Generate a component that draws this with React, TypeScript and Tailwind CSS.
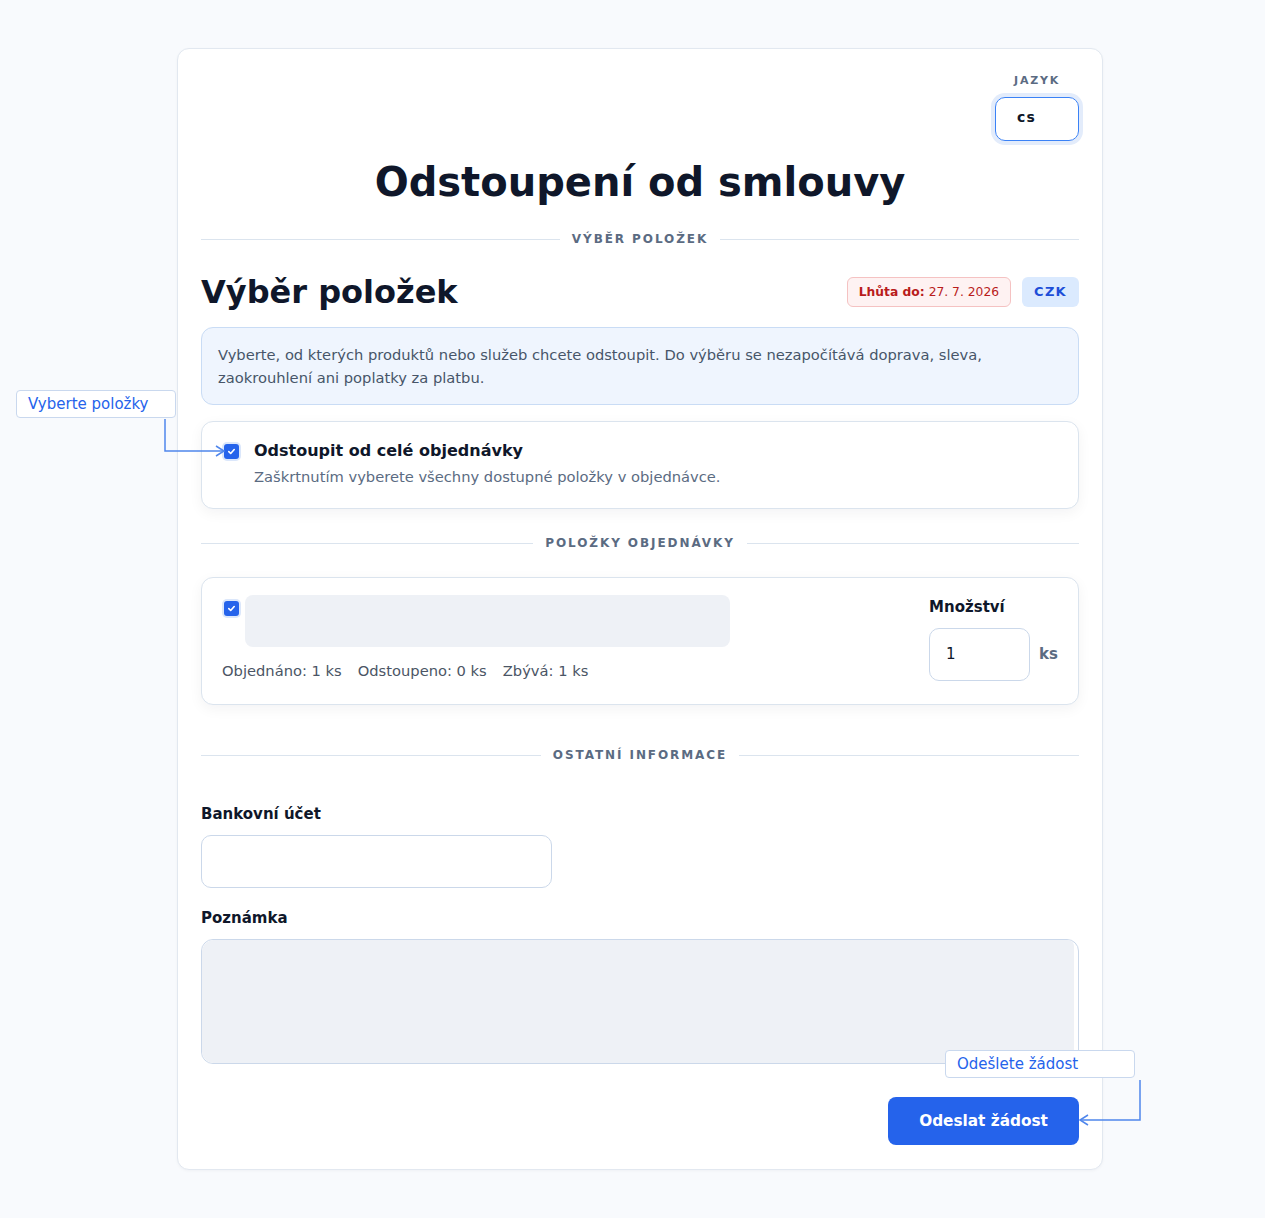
import React from "react";

const font = { fontFamily: '"DejaVu Sans", "Noto Sans", sans-serif' };

function Check() {
  return (
    <span className="flex h-[15px] w-[15px] shrink-0 items-center justify-center rounded-[3px] bg-[#2563eb] ring-2 ring-[#dbe7fb]">
      <svg width="9" height="9" viewBox="0 0 10 10" fill="none">
        <path d="M2 5.2 L4.1 7.2 L8 2.8" stroke="white" strokeWidth="1.8" strokeLinecap="round" strokeLinejoin="round" />
      </svg>
    </span>
  );
}

function Divider({ label, className }: { label: string; className: string }) {
  return (
    <div className={"flex items-center gap-3 " + className}>
      <div className="h-px flex-1 bg-[#dbe4ee]" />
      <span className="text-[12px] font-bold uppercase leading-4 tracking-[0.16em] text-[#5b6b82]">{label}</span>
      <div className="h-px flex-1 bg-[#dbe4ee]" />
    </div>
  );
}

export default function App() {
  return (
    <div className="relative min-h-[1218px] w-full bg-[#f8fafd] pt-12 pb-[49px]" style={font}>
      <div className="ml-[177px] w-[926px] rounded-xl border border-[#e2e8f0] bg-white pl-[23px] pr-[23px] pt-6 pb-6 shadow-[0_1px_3px_rgba(15,23,42,0.04)]">
        {/* language */}
        <div className="flex justify-end">
          <div className="flex flex-col items-center">
            <span className="text-[11px] font-bold leading-4 tracking-[0.16em] text-[#5b6b82]">JAZYK</span>
            <div className="mt-2 flex h-[44px] w-[84px] items-center rounded-[10px] border border-[#3b82f6] px-[21px] pb-[3px] text-[14px] font-bold tracking-[0.08em] text-[#0f172a] ring-4 ring-[#e3ecfb]">
              cs
            </div>
          </div>
        </div>

        <h1 className="mt-4 text-center text-[40px] font-bold leading-[50px] text-[#0f172a]">Odstoupení od smlouvy</h1>

        <Divider label="Výběr položek" className="mt-6" />

        <div className="mt-[25px] flex items-center justify-between">
          <h2 className="text-[32px] font-bold leading-10 text-[#0f172a]">Výběr položek</h2>
          <div className="flex items-center gap-[11px]">
            <span className="flex h-[30px] items-center rounded-md border border-[#f5c2c2] bg-[#fef2f2] px-[11px] text-[12.3px] text-[#b91c1c]">
              <b className="mr-1 font-bold">Lhůta do:</b>27. 7. 2026
            </span>
            <span className="flex h-[30px] items-center rounded-md bg-[#dbeafe] px-3 text-[13px] font-bold tracking-[0.1em] text-[#1d4ed8]">
              CZK
            </span>
          </div>
        </div>

        <div className="mt-[15px] rounded-xl border border-[#c9dcf5] bg-[#eff5fe] px-4 py-[15px] text-[14.7px] leading-[23px] text-[#475569]">
          Vyberte, od kterých produktů nebo služeb chcete odstoupit. Do výběru se nezapočítává doprava, sleva,
          <br />
          zaokrouhlení ani poplatky za platbu.
        </div>

        <div className="mt-4 rounded-xl border border-[#dbe4ee] bg-white px-5 pt-[17px] pb-[21px] shadow-[0_4px_14px_rgba(15,23,42,0.05)]">
          <div className="flex items-center gap-[15px] pl-[2px]">
            <Check />
            <span className="text-[16px] font-bold leading-6 text-[#0f172a]">Odstoupit od celé objednávky</span>
          </div>
          <p className="mt-1 pl-[32px] text-[14.7px] leading-5 text-[#5b6b82]">
            Zaškrtnutím vyberete všechny dostupné položky v objednávce.
          </p>
        </div>

        <Divider label="Položky objednávky" className="mt-[26px]" />

        <div className="mt-[26px] flex justify-between rounded-xl border border-[#dbe4ee] bg-white px-5 pt-[17px] pb-[23px] shadow-[0_4px_14px_rgba(15,23,42,0.05)]">
          <div className="flex flex-col">
            <div className="flex items-start gap-[6px]">
              <div className="mt-[6px] pl-[2px]">
                <Check />
              </div>
              <div className="h-[52px] w-[485px] rounded-lg bg-[#eef1f6]" />
            </div>
            <div className="mt-[14px] flex gap-4 text-[14.7px] leading-5 text-[#4b5565]">
              <span>Objednáno: 1 ks</span>
              <span>Odstoupeno: 0 ks</span>
              <span>Zbývá: 1 ks</span>
            </div>
          </div>
          <div className="flex flex-col">
            <span className="text-[15px] font-bold leading-6 text-[#0f172a]">Množství</span>
            <div className="mt-[9px] flex items-center gap-[9px]">
              <div className="flex h-[53px] w-[101px] items-center rounded-[10px] border border-[#cbd8ea] px-4 text-[15px] text-[#0f172a]">
                1
              </div>
              <span className="text-[15px] font-bold text-[#5b6b82]">ks</span>
            </div>
          </div>
        </div>

        <Divider label="Ostatní informace" className="mt-[42px]" />

        <div className="mt-[39px] text-[15px] font-bold leading-6 text-[#0f172a]">Bankovní účet</div>
        <div className="mt-[9px] h-[53px] w-[351px] rounded-[10px] border border-[#cbd8ea] bg-white" />

        <div className="mt-[18px] text-[15px] font-bold leading-6 text-[#0f172a]">Poznámka</div>
        <div className="mt-[9px] h-[125px] w-full rounded-xl border border-[#cbd8ea] bg-white pr-[4px]">
          <div className="h-full w-full rounded-l-xl rounded-tr-md bg-[#eef1f6]" />
        </div>

        <div className="mt-[33px] flex justify-end">
          <button className="h-[48px] w-[191px] rounded-lg bg-[#2563eb] text-[15.3px] font-bold text-white">Odeslat žádost</button>
        </div>
      </div>

      {/* annotations */}
      <div className="absolute left-[16px] top-[390px] flex h-[28px] w-[160px] items-center rounded border border-[#c9d8ee] bg-white pl-[11px] text-[15px] text-[#2563eb]">
        Vyberte položky
      </div>
      <div className="absolute left-[945px] top-[1050px] flex h-[28px] w-[190px] items-center rounded border border-[#c9d8ee] bg-white pl-[11px] text-[15px] text-[#2563eb]">
        Odešlete žádost
      </div>
      <svg className="pointer-events-none absolute left-0 top-0" width="1265" height="1218" fill="none">
        <path d="M165 419 V451 H224" stroke="#4f86ec" strokeWidth="1.5" />
        <path d="M216 446 L224 451 L216 456" stroke="#4f86ec" strokeWidth="1.5" />
        <path d="M1140 1080 V1120 H1080" stroke="#4f86ec" strokeWidth="1.5" />
        <path d="M1088 1115 L1080 1120 L1088 1125" stroke="#4f86ec" strokeWidth="1.5" />
      </svg>
    </div>
  );
}
